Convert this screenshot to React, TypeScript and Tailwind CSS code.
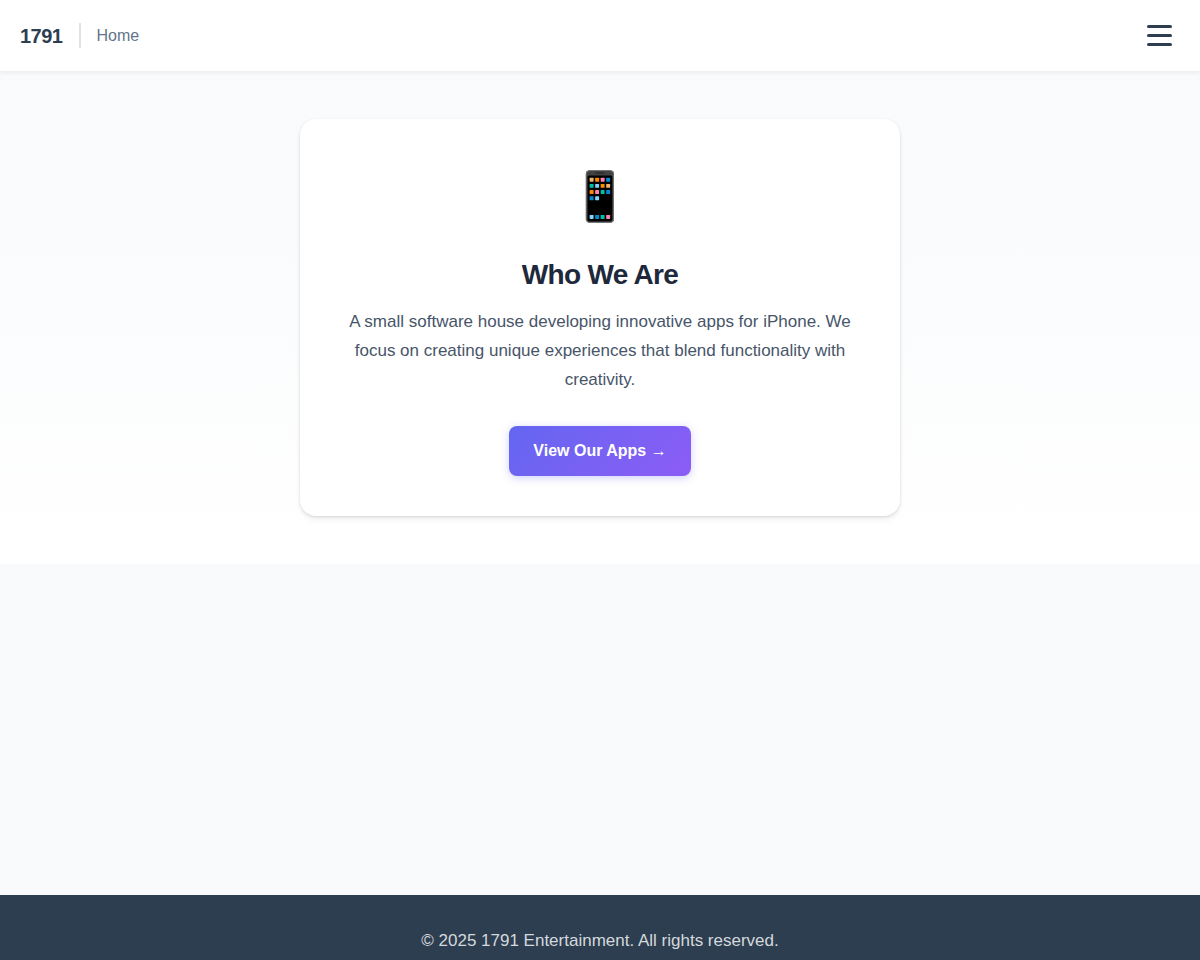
export default function App() {
  return (
    <div className="flex min-h-screen flex-col bg-[#f8fafc] font-['Liberation_Sans',sans-serif] text-[#2c3e50]">
      <header className="relative flex h-[71px] items-center justify-between bg-white px-5 shadow-[0_2px_4px_rgba(0,0,0,0.06)]">
        <div className="flex items-center">
          <a href="#" className="text-xl font-bold tracking-tight">1791</a>
          <span className="ml-4 h-[25px] w-0.5 bg-[#e2e2e6]" />
          <span className="ml-4 text-base text-[#64748b]">Home</span>
        </div>
        <button type="button" aria-label="Open menu" className="flex flex-col gap-1.5 p-2">
          <span className="h-[3px] w-[25px] rounded-sm bg-[#2c3e50]" />
          <span className="h-[3px] w-[25px] rounded-sm bg-[#2c3e50]" />
          <span className="h-[3px] w-[25px] rounded-sm bg-[#2c3e50]" />
        </button>
      </header>

      <main className="flex-1">
        <section className="bg-linear-to-b from-[#f8fafc] to-white px-5 py-12">
          <div className="mx-auto max-w-[600px] rounded-2xl bg-white p-10 text-center shadow-[0_1px_3px_rgba(0,0,0,0.12),0_4px_6px_rgba(0,0,0,0.05)]">
            <div className="mb-6 text-5xl leading-[75px]">📱</div>
            <h1 className="mb-4 text-[28px] leading-[33px] font-bold tracking-tight text-[#1e293b]">Who We Are</h1>
            <p className="mb-8 text-[17px] leading-[29px] text-[#475569]">
              A small software house developing innovative apps for iPhone. We focus on creating unique experiences that blend functionality with creativity.
            </p>
            <a href="#apps" className="inline-block rounded-lg bg-linear-135 from-[#6366f1] to-[#8b5cf6] px-6 py-3 text-base leading-[26px] font-bold text-white shadow-[0_2px_8px_rgba(99,102,241,0.3)]">
              View Our Apps →
            </a>
          </div>
        </section>
      </main>

      <footer className="bg-[#2c3e50] pt-8 text-center text-[17px] leading-[27px] text-[#d5d8dc]">
        <p className="pb-1.5">© 2025 1791 Entertainment. All rights reserved.</p>
      </footer>
    </div>
  );
}
